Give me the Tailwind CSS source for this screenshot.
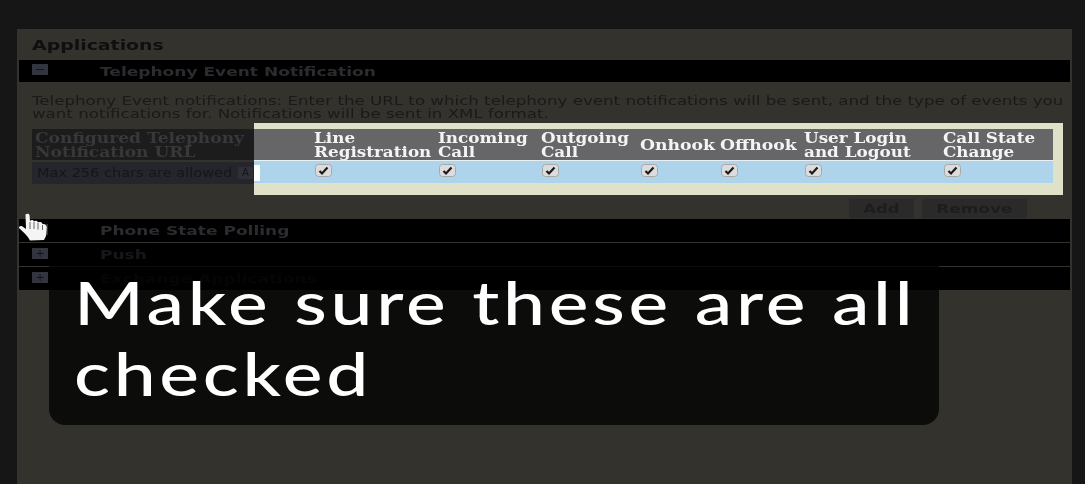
<!doctype html>
<html><head><meta charset="utf-8"><script src="https://cdn.jsdelivr.net/npm/@tailwindcss/browser@4"></script></head>
<body class="m-0 bg-[#161616]">
<div class="relative w-[1085px] h-[484px] overflow-hidden bg-[#161616] pl-[17px] pr-[13px] pt-[29px] font-['DejaVu_Sans',sans-serif] blur-[0.6px]">
  <div class="h-full bg-[#33322d] flex flex-col">
    <div class="h-[31px] pl-[15px] flex items-center text-[14px] leading-none font-bold text-[#0f0f0f]"><span class="origin-left scale-x-[1.35] whitespace-nowrap">Applications</span></div>
    <div class="mx-[2px] h-[22px] bg-black flex items-center pl-[13px] shrink-0">
      <div class="w-[16px] h-[11px] bg-[#33353e] -mt-[3px] flex items-center justify-center shrink-0"><div class="w-[8px] h-[1px] bg-[#15161a]"></div></div>
      <div class="ml-[52px] text-[13px] font-bold text-[#2b2b30] leading-none origin-left scale-x-[1.31] whitespace-nowrap">Telephony Event Notification</div>
    </div>
    <div class="mt-[12px] pl-[15px] h-[26px] text-[13px] leading-[13px] text-[#1a1a19]">
      <p class="origin-left scale-x-[1.28] whitespace-nowrap">Telephony Event notifications: Enter the URL to which telephony event notifications will be sent, and the type of events you<br>want notifications for. Notifications will be sent in XML format.</p>
    </div>
    <div class="ml-[15px] w-[222px] h-[31px] mt-[9px] bg-[#1c1c1c] pl-[3px] flex items-center font-['DejaVu_Serif',serif] text-[14px] leading-[14px] font-bold text-[#38383a]"><span class="origin-left scale-x-[1.22] whitespace-nowrap">Configured Telephony<br>Notification URL</span></div>
    <div class="ml-[15px] w-[222px] h-[22px] mt-[2px] bg-[#24262c] flex items-center pl-[5px] gap-[5px]">
      <div class="w-[196px] shrink-0"><div class="text-[12px] leading-none text-[#15161a] origin-left scale-x-[1.21] whitespace-nowrap">Max 256 chars are allowed</div></div>
      <span class="w-[15px] h-[12px] bg-[#2f3035] text-[10px] leading-[12px] text-center text-[#15161a]">A</span>
    </div>
    <div class="flex justify-end gap-[8px] pr-[45px] mt-[15px] h-[19px] shrink-0">
      <div class="w-[65px] h-[19px] bg-[#2a2a2b] text-[13px] font-bold text-[#1d1d1e] flex items-center justify-center"><span class="scale-x-[1.27]">Add</span></div>
      <div class="w-[105px] h-[19px] bg-[#2a2a2b] text-[13px] font-bold text-[#1d1d1e] flex items-center justify-center"><span class="scale-x-[1.3]">Remove</span></div>
    </div>
    <div class="mx-[2px] h-[23px] mt-[1px] bg-black flex items-center pl-[13px] shrink-0">
      <div class="w-[16px] h-[11px] bg-[#33353e] -mt-[3px] shrink-0"></div>
      <div class="ml-[52px] text-[13px] font-bold text-[#2b2b30] leading-none origin-left scale-x-[1.31] whitespace-nowrap">Phone State Polling</div>
    </div>
    <div class="mx-[2px] h-[23px] mt-[1px] bg-black flex items-center pl-[13px] shrink-0">
      <div class="w-[16px] h-[11px] bg-[#33353e] -mt-[3px] flex items-center justify-center text-[11px] leading-none text-[#15161a] shrink-0">+</div>
      <div class="ml-[52px] text-[13px] font-bold text-[#17171a] leading-none origin-left scale-x-[1.31] whitespace-nowrap">Push</div>
    </div>
    <div class="mx-[2px] h-[23px] mt-[1px] bg-black flex items-center pl-[13px] shrink-0">
      <div class="w-[16px] h-[11px] bg-[#33353e] -mt-[3px] flex items-center justify-center text-[11px] leading-none text-[#15161a] shrink-0">+</div>
      <div class="ml-[52px] text-[13px] font-bold text-[#17171a] leading-none origin-left scale-x-[1.31] whitespace-nowrap">Exchange Applications</div>
    </div>
  </div>

  <!-- highlighted column table -->
  <div class="absolute left-[254px] top-[123px] w-[809px] h-[72px] bg-[#dfe2c8] pt-[6px]">
    <div class="w-[799px] h-[31px] bg-[#666567] grid grid-cols-[60px_124px_103px_99px_80px_84px_139px_110px] items-center font-['DejaVu_Serif',serif] text-[14px] leading-[14px] font-bold text-[#f4f4f4]">
      <div></div>
      <div class="origin-left scale-x-[1.2] whitespace-nowrap">Line<br>Registration</div>
      <div class="origin-left scale-x-[1.2] whitespace-nowrap">Incoming<br>Call</div>
      <div class="origin-left scale-x-[1.2] whitespace-nowrap">Outgoing<br>Call</div>
      <div class="origin-left scale-x-[1.23] whitespace-nowrap">Onhook</div>
      <div class="origin-left scale-x-[1.23] whitespace-nowrap">Offhook</div>
      <div class="origin-left scale-x-[1.2] whitespace-nowrap">User Login<br>and Logout</div>
      <div class="origin-left scale-x-[1.2] whitespace-nowrap">Call State<br>Change</div>
    </div>
    <div class="w-[799px] h-[1px] bg-[#e8f0f4]"></div>
    <div class="w-[799px] h-[23px] bg-[#aed4ec] border-b border-[#cfe4ee] grid grid-cols-[61px_124px_103px_99px_80px_84px_139px_109px] items-start pt-[3px]">
      <div></div>
      <div><svg width="17" height="13" viewBox="0 0 17 13"><rect x="0.5" y="0.5" width="16" height="12" rx="3" fill="#dcdcdc" stroke="#a8a8a8"/><path d="M4.5 7 L7 9.5 L12.5 3.5" fill="none" stroke="#1a1a1a" stroke-width="2.2"/></svg></div>
      <div><svg width="17" height="13" viewBox="0 0 17 13"><rect x="0.5" y="0.5" width="16" height="12" rx="3" fill="#dcdcdc" stroke="#a8a8a8"/><path d="M4.5 7 L7 9.5 L12.5 3.5" fill="none" stroke="#1a1a1a" stroke-width="2.2"/></svg></div>
      <div><svg width="17" height="13" viewBox="0 0 17 13"><rect x="0.5" y="0.5" width="16" height="12" rx="3" fill="#dcdcdc" stroke="#a8a8a8"/><path d="M4.5 7 L7 9.5 L12.5 3.5" fill="none" stroke="#1a1a1a" stroke-width="2.2"/></svg></div>
      <div><svg width="17" height="13" viewBox="0 0 17 13"><rect x="0.5" y="0.5" width="16" height="12" rx="3" fill="#dcdcdc" stroke="#a8a8a8"/><path d="M4.5 7 L7 9.5 L12.5 3.5" fill="none" stroke="#1a1a1a" stroke-width="2.2"/></svg></div>
      <div><svg width="17" height="13" viewBox="0 0 17 13"><rect x="0.5" y="0.5" width="16" height="12" rx="3" fill="#dcdcdc" stroke="#a8a8a8"/><path d="M4.5 7 L7 9.5 L12.5 3.5" fill="none" stroke="#1a1a1a" stroke-width="2.2"/></svg></div>
      <div><svg width="17" height="13" viewBox="0 0 17 13"><rect x="0.5" y="0.5" width="16" height="12" rx="3" fill="#dcdcdc" stroke="#a8a8a8"/><path d="M4.5 7 L7 9.5 L12.5 3.5" fill="none" stroke="#1a1a1a" stroke-width="2.2"/></svg></div>
      <div><svg width="17" height="13" viewBox="0 0 17 13"><rect x="0.5" y="0.5" width="16" height="12" rx="3" fill="#dcdcdc" stroke="#a8a8a8"/><path d="M4.5 7 L7 9.5 L12.5 3.5" fill="none" stroke="#1a1a1a" stroke-width="2.2"/></svg></div>
    </div>
    <div class="absolute left-0 top-[42px] w-[6px] h-[16px] bg-white"></div>
  </div>

  <!-- caption -->
  <div class="absolute left-[49px] top-[262px] w-[890px] h-[163px] bg-black/75 rounded-b-[16px] pl-[25px] pt-[5px] font-['Lato',sans-serif] font-medium text-[60px] leading-[71px] text-white tracking-[3px]"><div class="origin-left scale-x-[1.25] whitespace-nowrap">Make sure these are all<br>checked</div></div>

  <!-- hand cursor -->
  <svg class="absolute left-[18px] top-[212px]" width="30" height="30" viewBox="0 0 30 30">
    <path d="M7.5 2.5 C8.5 1.5 11 1.5 11.5 3 L12 9 C13 7.5 15.5 7.5 16 9.5 C17 8 19.5 8.5 20 10.5 C21.5 9.5 24 10 24.5 12 C26.5 11.5 28.5 13 28.8 15 L28 24 L26 28 L12 28.5 C10 24 5 20 1 16 C0.8 14.5 2.5 13.5 4.5 14.5 L8 17 Z" fill="#f4f4f4"/>
    <path d="M12 10 V17 M16 10 V17 M20 11 V17.5 M24.5 13 V18" stroke="#666" stroke-width="1" fill="none"/>
  </svg>
</div>
</body></html>
